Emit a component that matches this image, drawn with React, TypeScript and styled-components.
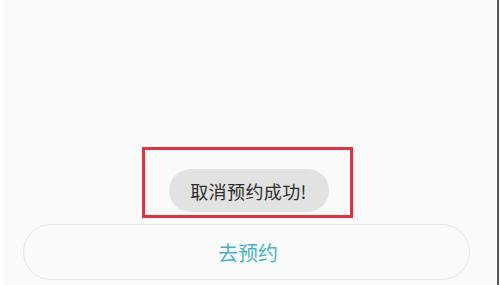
import React from "react";
import styled, { createGlobalStyle } from "styled-components";

const Global = createGlobalStyle`
  html, body { margin: 0; padding: 0; background: #fafafa; }
  body { font-family: "Noto Sans CJK SC", "Noto Sans", sans-serif; }
`;

const Screen = styled.div`
  width: 500px;
  height: 285px;
  display: flex;
  overflow: hidden;
  background: #fafafa;
`;

const Main = styled.div`
  flex: 1;
  display: flex;
  flex-direction: column;
  border-left: 3px solid #ffffff;
  background: #fafafa;
`;

const Ghost = styled.div`
  height: 147px;
  padding-left: 125px;
  box-sizing: border-box;
  color: #f1f1f1;
  font-size: 13px;
  line-height: 15px;
`;

const Frame = styled.div`
  box-sizing: border-box;
  width: 211px;
  height: 71px;
  margin-left: 139px;
  border: 3px solid #e0323f;
  display: flex;
  justify-content: center;
  align-items: flex-end;
  padding: 0 0 3px 2px;
`;

const Toast = styled.div`
  width: 160px;
  height: 43px;
  border-radius: 22px;
  background: #e2e2e2;
  color: #2e2e2e;
  font-size: 18px;
  display: flex;
  align-items: center;
  justify-content: center;
  letter-spacing: 0.4px;
`;

const Button = styled.div`
  box-sizing: border-box;
  margin: 6px 0 0 20px;
  width: 447px;
  height: 56px;
  border: 1px solid #e6e6e6;
  border-radius: 28px;
  background: #fafafa;
  color: #45b4c6;
  font-size: 20px;
  display: flex;
  align-items: center;
  justify-content: center;
  padding-left: 3px;
`;

const Edge = styled.div`
  width: 3px;
  display: flex;
`;

const EdgeLine = styled.div<{ $c: string }>`
  flex: 1;
  background: ${(p) => p.$c};
`;

export default function App() {
  return (
    <>
      <Global />
      <Screen>
        <Main>
          <Ghost>
            <div>&nbsp;</div>
          </Ghost>
          <Frame>
            <Toast>取消预约成功!</Toast>
          </Frame>
          <Button>去预约</Button>
        </Main>
        <Edge>
          <EdgeLine $c="#5a5a5a" />
          <EdgeLine $c="#f0f0f0" />
        </Edge>
      </Screen>
    </>
  );
}
